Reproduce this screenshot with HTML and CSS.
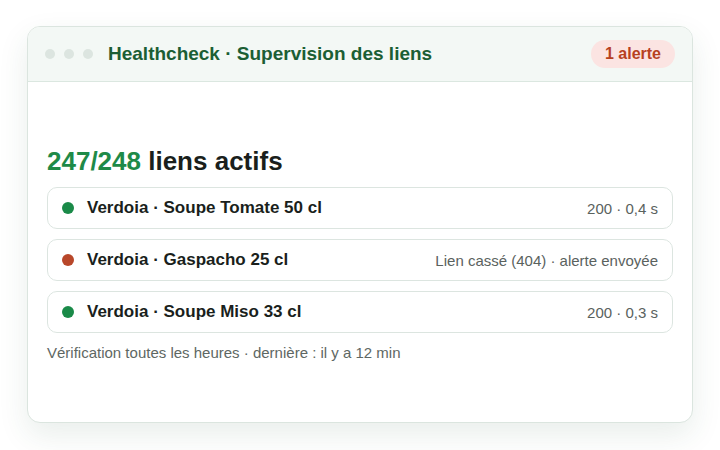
FILE: index.html
```html
<!DOCTYPE html>
<html lang="fr">
<head>
<meta charset="utf-8">
<title>Healthcheck</title>
<link rel="stylesheet" href="styles.css">
</head>
<body>
<div class="window">
  <div class="titlebar">
    <div class="dots"><span class="wdot"></span><span class="wdot"></span><span class="wdot"></span></div>
    <div class="title">Healthcheck · Supervision des liens</div>
    <div class="badge">1 alerte</div>
  </div>
  <div class="content">
    <h1 class="summary"><span class="count">247/248</span> liens actifs</h1>
    <ul class="links">
      <li class="link"><span class="status ok"></span><span class="name">Verdoia · Soupe Tomate 50 cl</span><span class="meta">200 · 0,4 s</span></li>
      <li class="link"><span class="status ko"></span><span class="name">Verdoia · Gaspacho 25 cl</span><span class="meta">Lien cassé (404) · alerte envoyée</span></li>
      <li class="link"><span class="status ok"></span><span class="name">Verdoia · Soupe Miso 33 cl</span><span class="meta">200 · 0,3 s</span></li>
    </ul>
    <p class="footnote">Vérification toutes les heures · dernière : il y a 12 min</p>
  </div>
</div>
</body>
</html>
```
FILE: styles.css
```css
* { box-sizing: border-box; }
html, body { margin: 0; padding: 0; }
body {
  background: #ffffff;
  font-family: "Liberation Sans", Arial, sans-serif;
  padding: 26px 27px;
  width: 720px;
  height: 450px;
}
.window {
  width: 666px;
  height: 397px;
  background: #ffffff;
  border: 1px solid #dbe5df;
  border-radius: 13px;
  box-shadow: 0 12px 30px rgba(40, 90, 60, 0.10);
  overflow: hidden;
}
.titlebar {
  height: 55px;
  background: #f3f8f5;
  border-bottom: 1px solid #dbe7e0;
  display: flex;
  align-items: center;
  padding: 0 17px 0 17px;
}
.dots { display: flex; gap: 9px; }
.wdot {
  width: 10px;
  height: 10px;
  border-radius: 50%;
  background: #dce5e0;
}
.title {
  margin-left: 15px;
  font-size: 19px;
  font-weight: bold;
  color: #1b5e34;
  flex: 1;
}
.badge {
  background: #fbe4e2;
  color: #b7411f;
  font-size: 16px;
  font-weight: bold;
  height: 28px;
  line-height: 28px;
  padding: 0 14px;
  border-radius: 14px;
}
.content {
  padding: 64px 19px 0 19px;
}
.summary {
  margin: 0;
  font-size: 26px;
  line-height: 30px;
  font-weight: bold;
  color: #1a1f1c;
}
.count { color: #1e8a48; }
.links {
  list-style: none;
  margin: 11px 0 0 0;
  padding: 0;
  display: flex;
  flex-direction: column;
  gap: 10px;
}
.link {
  height: 42px;
  border: 1px solid #dce5e0;
  border-radius: 10px;
  display: flex;
  align-items: center;
  padding: 0 14px;
}
.status {
  width: 12px;
  height: 12px;
  border-radius: 50%;
  margin-right: 13px;
  flex: none;
}
.status.ok { background: #1a8a48; }
.status.ko { background: #b8472a; }
.name {
  font-size: 17px;
  font-weight: bold;
  color: #1a1f1c;
  flex: 1;
}
.meta {
  font-size: 15px;
  color: #5a625e;
}
.footnote {
  margin: 10px 0 0 0;
  font-size: 15px;
  line-height: 20px;
  color: #5e6763;
}
```
